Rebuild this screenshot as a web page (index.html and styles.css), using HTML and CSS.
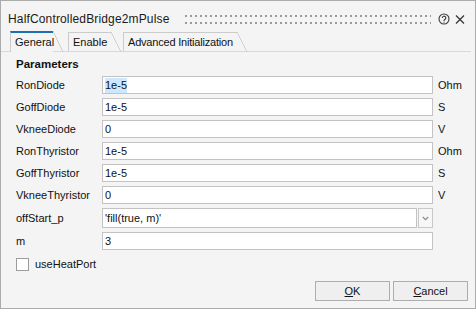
FILE: index.html
```html
<!DOCTYPE html>
<html>
<head>
<meta charset="utf-8">
<link rel="stylesheet" href="styles.css">
</head>
<body>
<div class="dialog">
  <div class="titlebar">
    <span class="title">HalfControlledBridge2mPulse</span>
    <span class="grip"></span>
    <svg class="help" width="12" height="12" viewBox="0 0 12 12"><circle cx="6" cy="6" r="5" fill="none" stroke="#3a3a3a" stroke-width="1.1"/><path d="M4.3 4.9a1.75 1.75 0 1 1 2.5 1.6c-.5.25-.8.5-.8 1.1v.4" fill="none" stroke="#3a3a3a" stroke-width="1.1"/><circle cx="6" cy="9.1" r=".7" fill="#3a3a3a"/></svg>
    <svg class="close" width="10" height="9" viewBox="0 0 10 9"><path d="M1 .5l8 8M9 .5l-8 8" stroke="#333" stroke-width="1.2"/></svg>
  </div>
  <div class="tabs">
    <div class="tab tab-general active">General</div>
    <div class="tab tab-enable">Enable</div>
    <div class="tab tab-adv">Advanced Initialization</div>
  </div>
  <div class="content">
    <div class="section">Parameters</div>
    <div class="params">
      <span class="lbl">RonDiode</span><div class="field"><span class="sel">1e-5</span></div><span class="unit">Ohm</span>
      <span class="lbl">GoffDiode</span><div class="field">1e-5</div><span class="unit">S</span>
      <span class="lbl">VkneeDiode</span><div class="field">0</div><span class="unit">V</span>
      <span class="lbl">RonThyristor</span><div class="field">1e-5</div><span class="unit">Ohm</span>
      <span class="lbl">GoffThyristor</span><div class="field">1e-5</div><span class="unit">S</span>
      <span class="lbl">VkneeThyristor</span><div class="field">0</div><span class="unit">V</span>
      <span class="lbl">offStart_p</span>
      <div class="combo"><div class="combo-field">'fill(true, m)'</div><div class="combo-btn"><svg width="7" height="5" viewBox="0 0 7 5"><path d="M.8 1l2.7 2.6L6.2 1" fill="none" stroke="#8a8a8a" stroke-width="1.2"/></svg></div></div>
      <span class="unit"></span>
      <span class="lbl">m</span><div class="field">3</div><span class="unit"></span>
    </div>
    <label class="check"><span class="box"></span>useHeatPort</label>
  </div>
  <div class="footer">
    <button class="btn"><u>O</u>K</button>
    <button class="btn"><u>C</u>ancel</button>
  </div>
</div>
</body>
</html>
```

FILE: styles.css
```css
html, body {
  margin: 0;
  padding: 0;
  background: #f4f4f4;
}
body {
  font-family: "Liberation Sans", Arial, sans-serif;
  font-size: 11px;
  color: #111;
}
.dialog {
  width: 476px;
  height: 309px;
  box-sizing: border-box;
  border: 1px solid #ababab;
  background: #f4f4f4;
  display: flex;
  flex-direction: column;
}
.titlebar {
  height: 30px;
  box-sizing: border-box;
  padding: 6px 10px 0 7px;
  display: flex;
  align-items: center;
}
.title {
  font-size: 12px;
  color: #1a1a1a;
  letter-spacing: 0.15px;
}
.grip {
  flex: 1;
  height: 9px;
  margin: 0 7px 0 16px;
  background:
    linear-gradient(90deg, #9a9a9a 2px, transparent 2px) 0 0 / 5px 2px repeat-x,
    linear-gradient(90deg, #9a9a9a 2px, transparent 2px) 0 7px / 5px 2px repeat-x;
}
.help {
  margin-right: 5px;
}
.tabs {
  display: flex;
  align-items: flex-end;
  height: 20px;
  margin-right: 4px;
  padding-left: 9px;
  border-bottom: 1px solid #d8d8d8;
}
.tab {
  position: relative;
  box-sizing: border-box;
  height: 19px;
  padding: 3px 0 0 4px;
  border-left: 1px solid #cbcbcb;
  border-top: 1px solid #cbcbcb;
  color: #111;
  font-size: 11px;
  white-space: nowrap;
}
.tab::after {
  content: "";
  position: absolute;
  top: -1px;
  right: -10px;
  width: 10px;
  height: 20px;
  background: linear-gradient(to top right, transparent calc(50% - 0.7px), #c4c4c4 50%, transparent calc(50% + 0.7px));
}
.tab.active {
  height: 21px;
  margin-bottom: -1px;
  padding-top: 3px;
  border-top: 2px solid #1f6fae;
  background: #f4f4f4;
}
.tab.active::after {
  top: -2px;
  height: 21px;
}
.tab-general { width: 43px; margin-right: 15px; }
.tab-enable { width: 43px; margin-right: 12px; }
.tab-adv { width: 114px; letter-spacing: -0.2px; }
.content {
  padding: 6px 0 0 15px;
}
.section {
  font-weight: bold;
  font-size: 11.5px;
  line-height: 13px;
  margin-bottom: 5px;
}
.params {
  display: grid;
  grid-template-columns: 86px 331px auto;
  row-gap: 4px;
  align-items: center;
}
.lbl {
  white-space: nowrap;
}
.field {
  box-sizing: border-box;
  height: 18px;
  border: 1px solid #c3c3c3;
  background: #fff;
  padding: 1px 0 0 2px;
  line-height: 15px;
}
.sel {
  background: #cce8ff;
  display: inline-block;
  line-height: 15px;
}
.unit {
  padding-left: 5px;
}
.combo {
  display: flex;
  height: 20px;
}
.combo-field {
  flex: 1;
  box-sizing: border-box;
  border: 1px solid #c3c3c3;
  background: #fff;
  padding: 2px 0 0 2px;
  line-height: 15px;
}
.combo-btn {
  box-sizing: border-box;
  width: 15px;
  margin-left: 1px;
  border: 1px solid #c8c8c8;
  background: #f7f7f7;
  display: flex;
  align-items: center;
  justify-content: center;
}
.check {
  display: flex;
  align-items: center;
  gap: 6px;
  margin-top: 8px;
  line-height: 13px;
}
.box {
  width: 13px;
  height: 13px;
  box-sizing: border-box;
  border: 1px solid #9c9c9c;
  background: #fff;
}
.footer {
  margin-top: auto;
  display: flex;
  justify-content: flex-end;
  gap: 3px;
  padding: 0 7px 7px 0;
}
.btn {
  width: 75px;
  height: 20px;
  box-sizing: border-box;
  border: 1px solid #adadad;
  background: #efefef;
  font-family: "Liberation Sans", Arial, sans-serif;
  font-size: 11px;
  color: #111;
  padding: 0;
}
```
